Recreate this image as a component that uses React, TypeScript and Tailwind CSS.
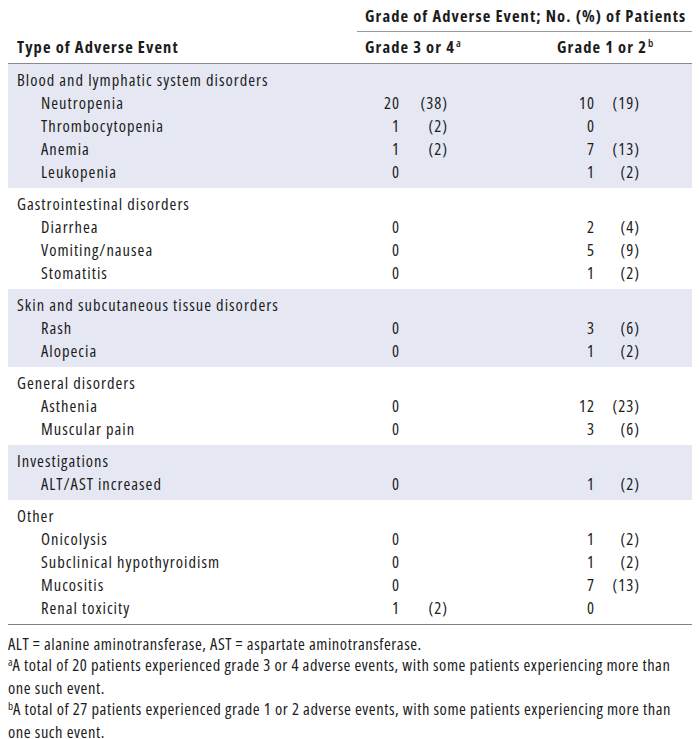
type Row = { name: string; g34: [string, string?]; g12: [string, string?] };
type Group = { title: string; shaded: boolean; rows: Row[] };

const groups: Group[] = [
  {
    title: "Blood and lymphatic system disorders",
    shaded: true,
    rows: [
      { name: "Neutropenia", g34: ["20", "(38)"], g12: ["10", "(19)"] },
      { name: "Thrombocytopenia", g34: ["1", "(2)"], g12: ["0"] },
      { name: "Anemia", g34: ["1", "(2)"], g12: ["7", "(13)"] },
      { name: "Leukopenia", g34: ["0"], g12: ["1", "(2)"] },
    ],
  },
  {
    title: "Gastrointestinal disorders",
    shaded: false,
    rows: [
      { name: "Diarrhea", g34: ["0"], g12: ["2", "(4)"] },
      { name: "Vomiting/nausea", g34: ["0"], g12: ["5", "(9)"] },
      { name: "Stomatitis", g34: ["0"], g12: ["1", "(2)"] },
    ],
  },
  {
    title: "Skin and subcutaneous tissue disorders",
    shaded: true,
    rows: [
      { name: "Rash", g34: ["0"], g12: ["3", "(6)"] },
      { name: "Alopecia", g34: ["0"], g12: ["1", "(2)"] },
    ],
  },
  {
    title: "General disorders",
    shaded: false,
    rows: [
      { name: "Asthenia", g34: ["0"], g12: ["12", "(23)"] },
      { name: "Muscular pain", g34: ["0"], g12: ["3", "(6)"] },
    ],
  },
  {
    title: "Investigations",
    shaded: true,
    rows: [{ name: "ALT/AST increased", g34: ["0"], g12: ["1", "(2)"] }],
  },
  {
    title: "Other",
    shaded: false,
    rows: [
      { name: "Onicolysis", g34: ["0"], g12: ["1", "(2)"] },
      { name: "Subclinical hypothyroidism", g34: ["0"], g12: ["1", "(2)"] },
      { name: "Mucositis", g34: ["0"], g12: ["7", "(13)"] },
      { name: "Renal toxicity", g34: ["1", "(2)"], g12: ["0"] },
    ],
  },
];

const cols = "grid grid-cols-[349px_43px_48px_147px_45px_1fr] h-[23px] items-center";

const DataRow = ({ row }: { row: Row }) => (
  <div className={cols}>
    <div className="pl-[33px] whitespace-nowrap">{row.name}</div>
    <div className="text-right">{row.g34[0]}</div>
    <div className="text-right">{row.g34[1] ?? ""}</div>
    <div className="text-right">{row.g12[0]}</div>
    <div className="text-right">{row.g12[1] ?? ""}</div>
    <div />
  </div>
);

export default function App() {
  return (
    <div className="w-[700px] h-[739px] bg-white text-[#1c1c1c] font-['Open_Sans',sans-serif] [font-stretch:75%] text-[16.5px] tracking-[1px] leading-none overflow-hidden">
      <div className="mx-[8px]">
        {/* header */}
        <div className="grid grid-cols-[349px_1fr]">
          <div />
          <div className="h-[32px] flex items-center pt-[2px] pl-[8px] font-bold tracking-[1.1px] border-b-[1.5px] border-[#9a9a9a] whitespace-nowrap">
            Grade of Adverse Event; No. (%) of Patients
          </div>
        </div>
        <div className="grid grid-cols-[349px_200px_1fr] h-[32px] items-center font-bold tracking-[1.1px] border-b-[1.5px] border-[#8a8a8a]">
          <div className="pl-[9px]">Type of Adverse Event</div>
          <div className="pl-[8px] whitespace-nowrap">
            Grade 3 or 4<span className="text-[11px] font-semibold tracking-normal ml-px relative -top-[6px]">a</span>
          </div>
          <div className="whitespace-nowrap">
            Grade 1 or 2<span className="text-[11px] font-semibold tracking-normal ml-px relative -top-[6px]">b</span>
          </div>
        </div>

        {/* body */}
        <div className="border-b-[1.5px] border-[#808080]">
          {groups.map((g) => (
            <div key={g.title} className={`pt-[5px] pb-[4px] ${g.shaded ? "bg-[#e5e8f3]" : "bg-white"}`}>
              <div className="h-[23px] flex items-center pl-[9px] whitespace-nowrap">{g.title}</div>
              {g.rows.map((r) => (
                <DataRow key={r.name} row={r} />
              ))}
            </div>
          ))}
        </div>

        {/* footnotes */}
        <div className="mt-[8px] leading-[21px] tracking-[0.55px]">
          <p className="whitespace-nowrap">ALT = alanine aminotransferase, AST = aspartate aminotransferase.</p>
          <p>
            <span className="whitespace-nowrap">
              <span className="text-[11px] tracking-normal relative -top-[5px]">a</span>A total of 20 patients experienced grade 3 or 4 adverse events, with some patients experiencing more than
            </span>
            <br />
            one such event.
          </p>
          <p>
            <span className="whitespace-nowrap">
              <span className="text-[11px] tracking-normal relative -top-[5px]">b</span>A total of 27 patients experienced grade 1 or 2 adverse events, with some patients experiencing more than
            </span>
            <br />
            one such event.
          </p>
        </div>
      </div>
    </div>
  );
}
